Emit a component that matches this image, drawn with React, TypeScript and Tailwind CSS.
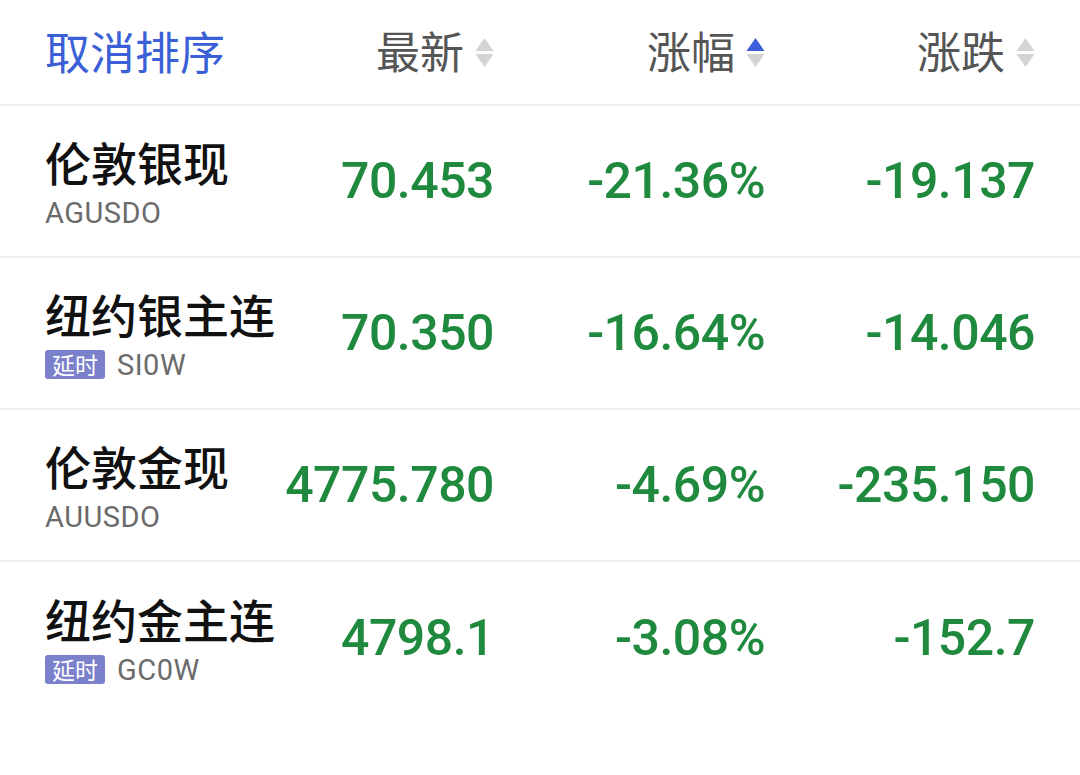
import React from "react";

// Quote list sorted by change % — header with sort arrows, four rows of metals quotes.

type Row = { name: string; code: string; delayed?: boolean; last: string; pct: string; chg: string };

const ROWS: Row[] = [
  { name: "伦敦银现", code: "AGUSDO", last: "70.453", pct: "-21.36%", chg: "-19.137" },
  { name: "纽约银主连", code: "SI0W", delayed: true, last: "70.350", pct: "-16.64%", chg: "-14.046" },
  { name: "伦敦金现", code: "AUUSDO", last: "4775.780", pct: "-4.69%", chg: "-235.150" },
  { name: "纽约金主连", code: "GC0W", delayed: true, last: "4798.1", pct: "-3.08%", chg: "-152.7" },
];

const cjk = "font-['Noto_Sans_CJK_SC','Noto_Sans',sans-serif]";
const num = "font-['Roboto','Liberation_Sans',sans-serif]";
const cols = "grid grid-cols-[1fr_212px_271px_270px] items-center px-[45px]";

function SortArrows({ active }: { active?: "up" | "down" }) {
  return (
    <svg width="19" height="32" viewBox="0 0 19 32" className="ml-[11px] mt-1 shrink-0">
      <path d="M9.5 2 L18.5 15 L0.5 15 Z" fill={active === "up" ? "#3b5fd8" : "#d4d4d4"} />
      <path d="M0.5 18 L18.5 18 L9.5 31 Z" fill={active === "down" ? "#3b5fd8" : "#d4d4d4"} />
    </svg>
  );
}

function HeadCell({ label, active }: { label: string; active?: "up" | "down" }) {
  return (
    <div className="flex items-center justify-end">
      <span className={`${cjk} text-[44px] leading-none text-[#555]`}>{label}</span>
      <SortArrows active={active} />
    </div>
  );
}

export default function App() {
  return (
    <div className="h-[775px] w-[1080px] bg-white">
      <div className={`${cols} h-[106px] border-b-2 border-[#eeeeee] pb-1`}>
        <span className={`${cjk} text-[45px] leading-none text-[#3a5fd6]`}>取消排序</span>
        <HeadCell label="最新" />
        <HeadCell label="涨幅" active="up" />
        <HeadCell label="涨跌" />
      </div>

      {ROWS.map((r, i) => (
        <div
          key={r.code}
          className={`${cols} h-[152px] ${i < ROWS.length - 1 ? "border-b-2 border-[#eeeeee]" : ""}`}
        >
          <div className="-mt-[2px] flex flex-col">
            <span className={`${cjk} whitespace-nowrap text-[46px] font-medium leading-[56px] text-[#111]`}>{r.name}</span>
            <div className="mt-[9px] flex items-center">
              {r.delayed && (
                <span className={`${cjk} mr-3 rounded-[3px] bg-[#7b80cb] px-[7px] text-[23px] leading-[29px] text-white`}>延时</span>
              )}
              <span className={`${num} text-[29px] leading-[30px] tracking-[0.5px] text-[#6b6b6b]`}>{r.code}</span>
            </div>
          </div>
          <span className={`${num} text-right text-[50px] font-medium leading-none tracking-[-0.5px] text-[#1f8a3e]`}>{r.last}</span>
          <span className={`${num} text-right text-[50px] font-medium leading-none tracking-[-0.5px] text-[#1f8a3e]`}>{r.pct}</span>
          <span className={`${num} text-right text-[50px] font-medium leading-none tracking-[-0.5px] text-[#1f8a3e]`}>{r.chg}</span>
        </div>
      ))}
    </div>
  );
}
